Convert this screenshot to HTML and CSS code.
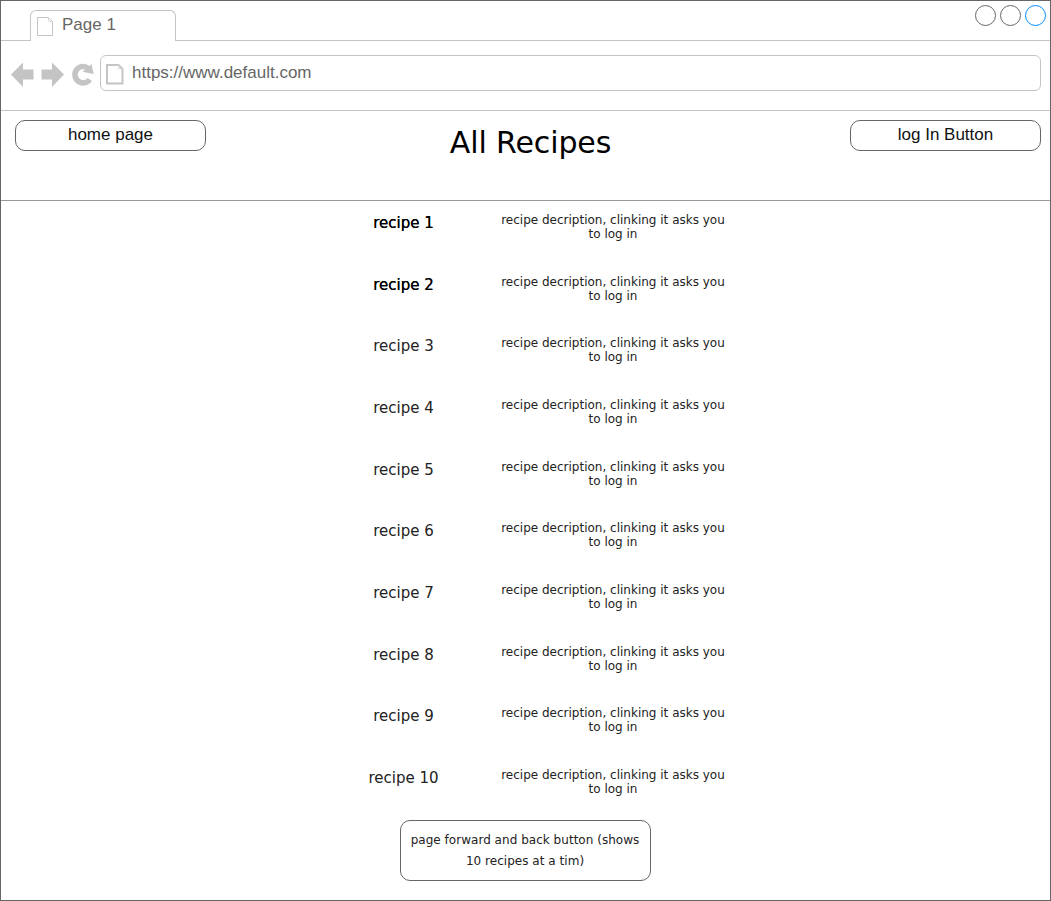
FILE: index.html
```html
<!DOCTYPE html>
<html lang="en">
<head>
<meta charset="utf-8">
<title>All Recipes</title>
<link rel="stylesheet" href="styles.css">
</head>
<body>
<div class="window">
  <div class="tabstrip">
    <div class="tab">
      <svg class="tab-icon" width="17" height="20" viewBox="0 0 17 20"><path d="M.5.5h11l4 4v14h-15z"/><path class="fold" d="M11.500 .5v4h4"/></svg>
      <span class="tab-label">Page 1</span>
    </div>
    <div class="controls"><i class="dot"></i><i class="dot"></i><i class="dot active"></i></div>
  </div>
  <div class="toolbar">
    <svg class="nav" width="84" height="26" viewBox="0 0 84 26">
      <path d="M0 12.500 12 .5V7.500H22.500V17.500H12V25z"/>
      <path d="M53 12.500 41 .5V7.500H30.500V17.500H41V25z"/>
      <path class="reload" d="M78.800 17.500A8.200 8.200 0 1 1 77.500 6.500"/>
      <path d="M80.500 2 82.700 12 71.500 9.800z"/>
    </svg>
    <div class="address">
      <svg class="page-icon" width="18" height="21" viewBox="0 0 18 21"><path d="M1 1h11.500l4 4v14.500H1z"/><path class="fold" d="M12.500 1v4h4"/></svg>
      <span class="url">https://www.default.com</span>
    </div>
  </div>
  <header class="header">
    <button class="button">home page</button>
    <h1 class="title">All Recipes</h1>
    <button class="button">log In Button</button>
  </header>
  <main class="content">
    <ul class="recipes">
      <li class="recipe strong"><span class="name">recipe 1</span><p class="desc">recipe decription, clinking it asks you<br>to log in</p></li>
      <li class="recipe strong"><span class="name">recipe 2</span><p class="desc">recipe decription, clinking it asks you<br>to log in</p></li>
      <li class="recipe"><span class="name">recipe 3</span><p class="desc">recipe decription, clinking it asks you<br>to log in</p></li>
      <li class="recipe"><span class="name">recipe 4</span><p class="desc">recipe decription, clinking it asks you<br>to log in</p></li>
      <li class="recipe"><span class="name">recipe 5</span><p class="desc">recipe decription, clinking it asks you<br>to log in</p></li>
      <li class="recipe"><span class="name">recipe 6</span><p class="desc">recipe decription, clinking it asks you<br>to log in</p></li>
      <li class="recipe"><span class="name">recipe 7</span><p class="desc">recipe decription, clinking it asks you<br>to log in</p></li>
      <li class="recipe"><span class="name">recipe 8</span><p class="desc">recipe decription, clinking it asks you<br>to log in</p></li>
      <li class="recipe"><span class="name">recipe 9</span><p class="desc">recipe decription, clinking it asks you<br>to log in</p></li>
      <li class="recipe"><span class="name">recipe 10</span><p class="desc">recipe decription, clinking it asks you<br>to log in</p></li>
    </ul>
    <button class="pager">page forward and back button (shows<br>10 recipes at a tim)</button>
  </main>
</div>
</body>
</html>
```
FILE: styles.css
```css
* { box-sizing: border-box; }
body { margin: 0; background: #fff; color: #222; font-family: Verdana, "DejaVu Sans", sans-serif; }
.window { width: 1051px; height: 901px; border: 1px solid #666; overflow: hidden; }

.tabstrip { display: flex; justify-content: space-between; height: 40px; padding-left: 29px; border-bottom: 1px solid #c4c4c4; }
.tab { display: flex; width: 146px; height: 31px; margin-top: 9px; padding-left: 6px; border: 1px solid #c4c4c4; border-bottom: 0; border-radius: 6px 6px 0 0; background: #fff; }
.tab-icon { margin-top: 6px; }
.tab-icon path, .page-icon path { fill: none; stroke: #c4c4c4; }
.tab-label { margin-left: 8px; font: 17px/28px "Liberation Sans", Arial, sans-serif; color: #666; }
.controls { display: flex; gap: 4px; padding: 4px 4px 0 0; }
.dot { width: 21px; height: 21px; border: 1px solid #666; border-radius: 50%; }
.dot.active { border-color: #008cff; }

.toolbar { display: flex; height: 70px; padding: 14px 9px 0 10px; border-bottom: 1px solid #c4c4c4; }
.nav { flex: none; margin-top: 7px; fill: #c4c4c4; }
.nav .reload { fill: none; stroke: #c4c4c4; stroke-width: 5.5; }
.address { display: flex; flex: 1; height: 36px; margin-left: 5px; padding-left: 5px; border: 1px solid #c4c4c4; border-radius: 6px; }
.page-icon { margin-top: 8px; }
.page-icon path { stroke-width: 2; }
.tab-icon .fold, .page-icon .fold { stroke: #ddd; stroke-width: 1; }
.url { margin-left: 8px; font: 17px/34px "Liberation Sans", Arial, sans-serif; color: #666; }

.header { display: flex; justify-content: space-between; align-items: flex-start; height: 90px; padding: 9px 9px 0 14px; border-bottom: 1px solid #999; }
.button { width: 191px; height: 31px; padding: 0 0 1px; border: 1px solid #666; border-radius: 10px; background: #fff; color: #111; font: 17px/26px "Liberation Sans", Arial, sans-serif; }
.title { margin: 1px 0 0; padding-left: 5px; color: #000; font-size: 30px; font-weight: 400; line-height: 44px; letter-spacing: -0.1px; }

.content { display: flex; flex-direction: column; align-items: center; }
.recipes { width: 100%; margin: 0; padding: 0; list-style: none; }
.recipe { display: flex; height: 61.67px; padding: 12px 0 0 342px; }
.name { width: 121px; font-size: 15px; line-height: 20px; text-align: center; }
.strong .name { color: #000; text-shadow: 0 0 0 #000; }
.desc { width: 240px; margin: 0 0 0 29px; font-size: 12px; line-height: 14px; text-align: center; white-space: nowrap; }
.pager { width: 251px; height: 61px; margin-top: 2px; padding: 2px 1px 0 0; border: 1px solid #666; border-radius: 10px; background: #fff; color: #222; font: 12px/21px Verdana, "DejaVu Sans", sans-serif; letter-spacing: 0.03px; white-space: nowrap; }
```
